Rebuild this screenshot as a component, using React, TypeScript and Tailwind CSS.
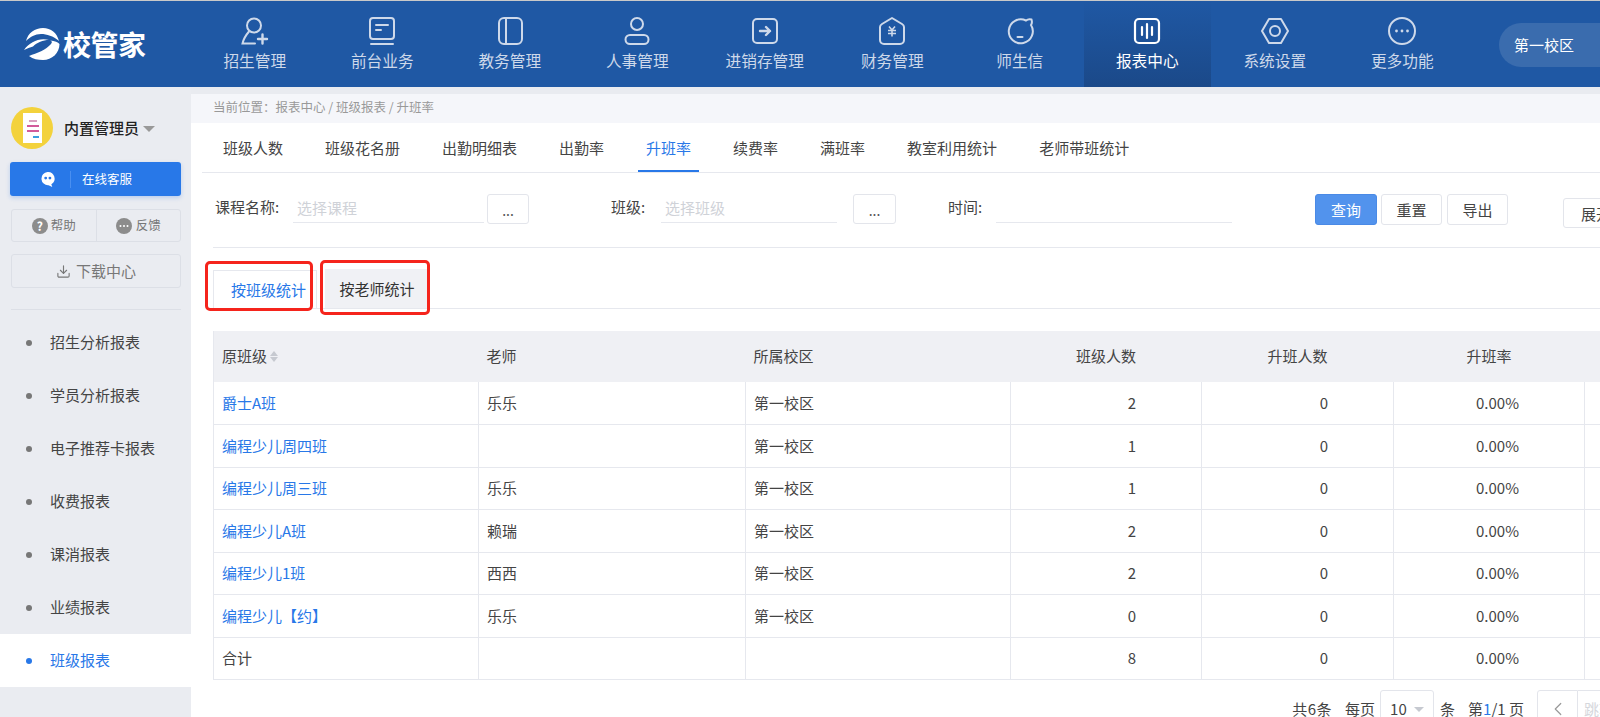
import React from 'react';
import { ChevronLeft, Download } from 'lucide-react';

const iconCls = 'w-[30px] h-[30px]';

// nav icons, all drawn on a 30x30 box with a 2px stroke
const navIcons: Record<string, React.ReactNode> = {
  recruit: (
    <svg viewBox="0 0 30 30" className={iconCls} fill="none" stroke="currentColor" strokeWidth="2" strokeLinecap="round">
      <circle cx="14" cy="9.5" r="7" />
      <path d="M9 15.5C6 19 3.5 23 2.5 27.5H15" />
      <path d="M18 23h9M22.5 18.5v9" strokeWidth="2.4" />
    </svg>
  ),
  desk: (
    <svg viewBox="0 0 30 30" className={iconCls} fill="none" stroke="currentColor" strokeWidth="2" strokeLinecap="round">
      <rect x="3" y="2" width="24" height="21" rx="3" />
      <path d="M9 9h12M9 14h5M4 28h22" />
    </svg>
  ),
  teach: (
    <svg viewBox="0 0 30 30" className={iconCls} fill="none" stroke="currentColor" strokeWidth="2">
      <rect x="4" y="2" width="23" height="26" rx="5" />
      <path d="M11 2v26" />
    </svg>
  ),
  hr: (
    <svg viewBox="0 0 30 30" className={iconCls} fill="none" stroke="currentColor" strokeWidth="2">
      <circle cx="15" cy="8" r="6" />
      <rect x="3.5" y="19" width="23" height="9" rx="4.5" />
    </svg>
  ),
  stock: (
    <svg viewBox="0 0 30 30" className={iconCls} fill="none" stroke="currentColor" strokeWidth="2" strokeLinecap="round" strokeLinejoin="round">
      <rect x="3" y="3" width="24" height="24" rx="4" />
      <path d="M10 15h10M16 11l4 4-4 4" strokeWidth="2.4" />
    </svg>
  ),
  finance: (
    <svg viewBox="0 0 30 30" className={iconCls} fill="none" stroke="currentColor" strokeWidth="2" strokeLinejoin="round">
      <path d="M15 2l10 6c1.200.7 2 1.800 2 3v13a4 4 0 0 1-4 4H7a4 4 0 0 1-4-4V11c0-1.200.8-2.300 2-3z" />
      <path d="M12 10.500l3 3.500 3-3.500M11 14.500h8M11 17.500h8M15 14v6.500" strokeWidth="1.600" />
    </svg>
  ),
  message: (
    <svg viewBox="0 0 30 30" className={iconCls} fill="none" stroke="currentColor" strokeWidth="2" strokeLinecap="round">
      <path d="M21 4.500A12 12 0 1 0 26 9c1-1.500 1-4 .5-5.500-1.500-.5-4-.2-5.500 1z" />
      <path d="M12.500 21h5" />
    </svg>
  ),
  report: (
    <svg viewBox="0 0 30 30" className={iconCls} fill="none" stroke="currentColor" strokeWidth="2.200" strokeLinecap="round">
      <rect x="3" y="3" width="24" height="24" rx="4" />
      <path d="M10 11v8M15 8v14M20 11v8" />
    </svg>
  ),
  settings: (
    <svg viewBox="0 0 30 30" className={iconCls} fill="none" stroke="currentColor" strokeWidth="2" strokeLinejoin="round">
      <path d="M9 3h12l7 12-7 12H9L2 15z" />
      <circle cx="15" cy="15" r="5" />
    </svg>
  ),
  more: (
    <svg viewBox="0 0 30 30" className={iconCls} fill="none" stroke="currentColor" strokeWidth="2">
      <circle cx="15" cy="15" r="13" />
      <circle cx="9.500" cy="15" r="1.400" fill="currentColor" stroke="none" />
      <circle cx="15" cy="15" r="1.400" fill="currentColor" stroke="none" />
      <circle cx="20.500" cy="15" r="1.400" fill="currentColor" stroke="none" />
    </svg>
  ),
};

const navItems = [
  { key: 'recruit', label: '招生管理' },
  { key: 'desk', label: '前台业务' },
  { key: 'teach', label: '教务管理' },
  { key: 'hr', label: '人事管理' },
  { key: 'stock', label: '进销存管理' },
  { key: 'finance', label: '财务管理' },
  { key: 'message', label: '师生信' },
  { key: 'report', label: '报表中心', active: true },
  { key: 'settings', label: '系统设置' },
  { key: 'more', label: '更多功能' },
];

const menuItems = ['招生分析报表', '学员分析报表', '电子推荐卡报表', '收费报表', '课消报表', '业绩报表', '班级报表'];
const reportTabs = ['班级人数', '班级花名册', '出勤明细表', '出勤率', '升班率', '续费率', '满班率', '教室利用统计', '老师带班统计'];

const rows = [
  { name: '爵士A班', teacher: '乐乐', count: 2 },
  { name: '编程少儿周四班', teacher: '', count: 1 },
  { name: '编程少儿周三班', teacher: '乐乐', count: 1 },
  { name: '编程少儿A班', teacher: '赖瑞', count: 2 },
  { name: '编程少儿1班', teacher: '西西', count: 2 },
  { name: '编程少儿【约】', teacher: '乐乐', count: 0 },
];

function Logo() {
  return (
    <div className="flex items-center w-[191px] pl-[24px] shrink-0">
      <svg viewBox="0 0 36 32" className="w-[36px] h-[32px]" fill="#fff">
        <path d="M2 13C4 5 11 0 19 0c8 0 14 5 16 13-6-5-12-7-18-7C11 6 6 9 2 13z" />
        <path d="M0 22C6 14 15 9.500 25 12c-6 0-12 2.500-16 6.500-3 1-6 2-9 3.500z" />
        <path d="M5 28c8-3 17-6 22-12 1.500-2 1-3-1-3.500 5 .5 8 1.500 9.500 3.500C35.500 25 28 32 19 32c-5 0-10-1-14-4z" />
      </svg>
      <span className="ml-[3px] text-[28px] font-bold text-white tracking-[-0.5px]">校管家</span>
    </div>
  );
}

function Header() {
  return (
    <div className="flex h-[86px] bg-[#1f58a4] overflow-hidden">
      <Logo />
      {navItems.map((item) => (
        <div
          key={item.key}
          className={`w-[127.5px] shrink-0 flex flex-col items-center pt-[15px] ${
            item.active ? 'text-white bg-gradient-to-b from-[#1f58a4] to-[#1b4989]' : 'text-[#ced9ea]'
          }`}
        >
          {navIcons[item.key]}
          <span className="mt-[4px] text-[15.700px] leading-[22px]">{item.label}</span>
        </div>
      ))}
      <div className="ml-[33px] mt-[22px] h-[44px] w-[120px] shrink-0 rounded-l-[22px] bg-[#3a6cae] pl-[15px] text-[15px] leading-[44px] text-white">
        第一校区
      </div>
    </div>
  );
}

function Avatar() {
  return (
    <div className="relative w-[42px] h-[42px] rounded-full bg-[#f3d23c] overflow-hidden shrink-0">
      <div className="absolute left-[12px] top-[6px] w-[19px] h-[30px] bg-white flex flex-col items-center pt-[7px] gap-[3px]">
        <div className="w-[8px] h-[2px] bg-[#d9a0c0]" />
        <div className="w-[12px] h-[2px] bg-[#d25a9a]" />
        <div className="w-[12px] h-[2px] bg-[#d25a9a]" />
        <div className="w-[6px] h-[2px] bg-[#3aa0e0] ml-[6px] mt-[1px]" />
      </div>
    </div>
  );
}

function Sidebar() {
  return (
    <div className="w-[191px] shrink-0 h-[630px] bg-[#eaecf1] pt-[20px]">
      <div className="flex items-center pl-[11px] h-[42px]">
        <Avatar />
        <span className="ml-[11px] text-[15px] font-medium text-[#222]">内置管理员</span>
        <span className="ml-[4px] mt-[2px] border-x-[6px] border-x-transparent border-t-[6px] border-t-[#999]" />
      </div>
      <div className="mx-[10px] mt-[13px] h-[34px] w-[171px] rounded-[3px] bg-[#2878e8] shadow-[0_2px_4px_rgba(40,120,232,0.25)] flex items-center text-white">
        <svg viewBox="0 0 18 18" className="ml-[30px] w-[17px] h-[17px]">
          <path d="M8 1a7 7 0 1 0 1 14l4 2-1-3a7 7 0 0 0-4-13z" fill="#fff" />
          <circle cx="6" cy="7.500" r="1.500" fill="#2878e8" />
          <circle cx="10.500" cy="7.500" r="1.500" fill="#2878e8" />
        </svg>
        <div className="ml-[13px] h-[17px] border-l border-[#4a8ff0]" />
        <span className="ml-[11px] text-[12.500px]">在线客服</span>
      </div>
      <div className="mx-[11px] mt-[13px] h-[33px] w-[170px] rounded-[3px] border border-[#dcdfe6] flex text-[12.500px] text-[#777]">
        <div className="flex-1 flex items-center justify-center border-r border-[#dcdfe6] gap-[3px]">
          <span className="w-[16px] h-[16px] rounded-full bg-[#8c8c8c] text-white text-[12px] leading-[16px] text-center font-bold">?</span>
          帮助
        </div>
        <div className="flex-1 flex items-center justify-center gap-[4px]">
          <svg viewBox="0 0 16 16" className="w-[16px] h-[16px]">
            <circle cx="8" cy="8" r="8" fill="#8c8c8c" />
            <circle cx="4.500" cy="8" r="1" fill="#fff" />
            <circle cx="8" cy="8" r="1" fill="#fff" />
            <circle cx="11.500" cy="8" r="1" fill="#fff" />
          </svg>
          反馈
        </div>
      </div>
      <div className="mx-[11px] mt-[12px] h-[34px] w-[170px] rounded-[3px] border border-[#dcdfe6] flex items-center justify-center gap-[5px] text-[15px] text-[#777]">
        <Download className="w-[15px] h-[15px]" strokeWidth={1.800} />
        下载中心
      </div>
      <div className="mx-[11px] mt-[21px] w-[170px] border-t border-[#dcdfe6]" />
      <div className="mt-[6px]">
        {menuItems.map((m) => {
          const active = m === '班级报表';
          return (
            <div
              key={m}
              className={`flex items-center h-[53px] text-[15px] ${active ? 'bg-white text-[#2878e8]' : 'text-[#444]'}`}
            >
              <span className={`ml-[26px] w-[6px] h-[6px] rounded-full ${active ? 'bg-[#2878e8]' : 'bg-[#777]'}`} />
              <span className="ml-[18px]">{m}</span>
            </div>
          );
        })}
      </div>
    </div>
  );
}

function EllipsisButton({ className }: { className: string }) {
  return (
    <div className={`h-[30px] border border-[#e3e5eb] rounded-[3px] text-center text-[14px] leading-[30px] text-[#555] shrink-0 ${className}`}>...</div>
  );
}

function ActionButton({ label, className }: { label: string; className: string }) {
  return (
    <div className={`h-[31px] rounded-[3px] text-center text-[15px] leading-[30px] shrink-0 ${className}`}>{label}</div>
  );
}

function FilterBar() {
  return (
    <div className="flex items-start h-[75px] pt-[21px] pl-[2px] ml-[22px] text-[15px] text-[#444] border-b border-[#e6e8ee]">
      <span className="w-[78px] shrink-0 leading-[26px]">课程名称:</span>
      <div className="w-[191px] h-[29px] shrink-0 border-b border-[#e6e8ee] text-[#cfd2d8] leading-[28px] pl-[4px]">选择课程</div>
      <EllipsisButton className="ml-[3px] w-[42px]" />
      <span className="ml-[82px] w-[50px] shrink-0 leading-[26px]">班级:</span>
      <div className="w-[176px] h-[29px] shrink-0 border-b border-[#e6e8ee] text-[#cfd2d8] leading-[28px] pl-[4px]">选择班级</div>
      <EllipsisButton className="ml-[16px] w-[43px]" />
      <span className="ml-[52px] w-[48px] shrink-0 leading-[26px]">时间:</span>
      <div className="w-[236px] h-[29px] shrink-0 border-b border-[#e6e8ee]" />
      <ActionButton label="查询" className="ml-[83px] w-[62px] bg-[#5293ed] border border-[#4a8ae6] text-white" />
      <ActionButton label="重置" className="ml-[4px] w-[61px] border border-[#e3e5eb]" />
      <ActionButton label="导出" className="ml-[5px] w-[61px] border border-[#e3e5eb]" />
      <div className="ml-[55px] mt-[4px] h-[30px] w-[60px] shrink-0 border border-[#e3e5eb] rounded-[3px] pl-[17px] leading-[30px]">展开</div>
    </div>
  );
}

function StatTabs() {
  return (
    <div className="flex items-end h-[38px] mt-[23px] ml-[22px] border-b border-[#e6e8ee] text-[15px]">
      <div className="relative h-[38px] w-[104px] shrink-0 border-t border-x border-[#e6e8ee] bg-white pl-[17px] leading-[38px] text-[#2878e8]">
        按班级统计
        <div className="absolute left-[-9px] top-[-10px] w-[108px] h-[50px] rounded-[5px] border-[3px] border-[#f5241c]" />
      </div>
      <div className="relative ml-[8px] h-[39px] w-[104px] shrink-0 bg-[#f0f1f5] text-center leading-[39px] text-[#333]">
        按老师统计
        <div className="absolute left-[-5px] top-[-9px] w-[110px] h-[55px] rounded-[5px] border-[3px] border-[#f5241c]" />
      </div>
    </div>
  );
}

function ReportTable() {
  const cell = 'border-b border-r border-[#e6e8ee] h-[42.500px] px-[8px] font-normal';
  const num = `${cell} text-right !pr-[65px]`;
  return (
    <table className="mt-[22px] ml-[22px] w-[1500px] table-fixed border-collapse border-l border-[#e6e8ee] text-[15px] text-[#444]">
      <colgroup>
        <col className="w-[265px]" />
        <col className="w-[267px]" />
        <col className="w-[265px]" />
        <col className="w-[191px]" />
        <col className="w-[192px]" />
        <col className="w-[191px]" />
        <col />
      </colgroup>
      <thead>
        <tr className="h-[51px] bg-[#eff0f4]">
          <th className="px-[8px] text-left font-normal">
            <span className="inline-flex items-center">
              原班级
              <span className="ml-[3px] flex flex-col gap-[1px]">
                <span className="border-x-[4px] border-x-transparent border-b-[5px] border-b-[#c6c9d0]" />
                <span className="border-x-[4px] border-x-transparent border-t-[5px] border-t-[#c6c9d0]" />
              </span>
            </span>
          </th>
          <th className="px-[8px] text-left font-normal">老师</th>
          <th className="px-[8px] text-left font-normal">所属校区</th>
          <th className="font-normal">班级人数</th>
          <th className="font-normal">升班人数</th>
          <th className="font-normal">升班率</th>
          <th />
        </tr>
      </thead>
      <tbody>
        {rows.map((r) => (
          <tr key={r.name}>
            <td className={`${cell} text-[#2878e8]`}>{r.name}</td>
            <td className={cell}>{r.teacher}</td>
            <td className={cell}>第一校区</td>
            <td className={num}>{r.count}</td>
            <td className={num}>0</td>
            <td className={num}>0.00%</td>
            <td className={cell} />
          </tr>
        ))}
        <tr>
          <td className={cell}>合计</td>
          <td className={cell} />
          <td className={cell} />
          <td className={num}>8</td>
          <td className={num}>0</td>
          <td className={num}>0.00%</td>
          <td className={cell} />
        </tr>
      </tbody>
    </table>
  );
}

function Pagination() {
  return (
    <div className="flex items-center justify-end h-[38px] mt-[10px] w-[1447px] text-[15px] text-[#444]">
      <span className="tracking-[0.5px]">共6条</span>
      <span className="ml-[13px]">每页</span>
      <div className="ml-[5px] h-[38px] w-[54px] border border-[#e3e5eb] rounded-[3px] flex items-center pl-[9px] gap-[7px]">
        10
        <span className="border-x-[5px] border-x-transparent border-t-[5px] border-t-[#c6c9d0]" />
      </div>
      <span className="ml-[6px]">条</span>
      <span className="ml-[13px]">
        第<span className="text-[#2878e8]">1</span>/1 页
      </span>
      <div className="ml-[13px] h-[38px] w-[41px] border border-[#e3e5eb] rounded-l-[3px] flex items-center justify-center text-[#999]">
        <ChevronLeft className="w-[22px] h-[22px]" strokeWidth={1.300} />
      </div>
      <div className="h-[38px] w-[60px] border-y border-[#e3e5eb] pl-[6px] leading-[36px] text-[#d5d7dc] shrink-0">跳转</div>
    </div>
  );
}

export default function App() {
  return (
    <div className="w-[1600px] h-[717px] overflow-hidden bg-white border-t border-[#c9c9c9] font-['Noto_Sans_CJK_SC','Liberation_Sans',sans-serif]">
      <Header />
      <div className="flex">
        <Sidebar />
        <div className="w-[1409px] overflow-hidden">
          <div className="h-[7px] bg-[#e9ebf0]" />
          <div className="h-[29px] bg-[#f5f6fa] pl-[22px] text-[12.500px] leading-[26px] text-[#999]">
            当前位置：报表中心 / 班级报表 / 升班率
          </div>
          <div className="flex h-[50px] ml-[11px] pl-[21px] gap-[42px] border-b border-[#e6e8ee] text-[15px] text-[#444]">
            {reportTabs.map((t) => (
              <div key={t} className={`h-[49px] leading-[50px] ${t === '升班率' ? '-mx-[8px] px-[8px] text-[#2878e8] border-b-2 border-[#2878e8]' : ''}`}>
                {t}
              </div>
            ))}
          </div>
          <FilterBar />
          <StatTabs />
          <ReportTable />
          <Pagination />
        </div>
      </div>
    </div>
  );
}
